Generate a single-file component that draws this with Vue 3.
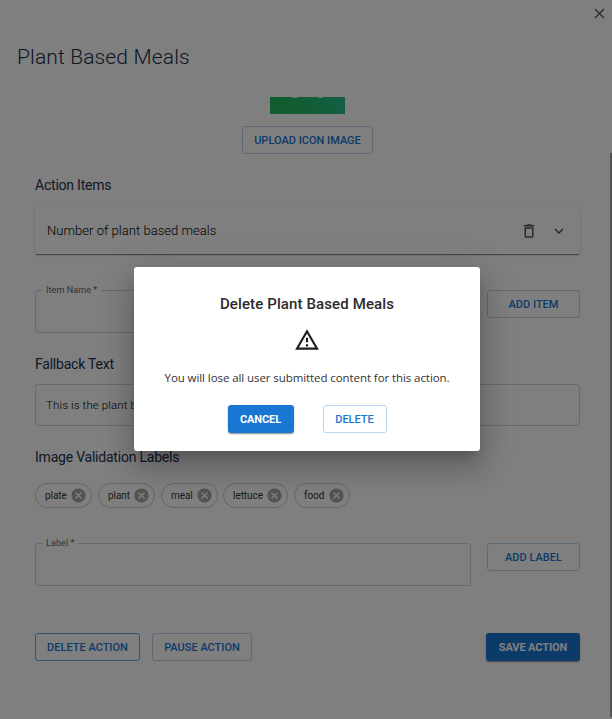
<script setup>
import { ref } from 'vue'

const labels = ref([
  { text: 'plate', size: 'w57' },
  { text: 'plant', size: 'w57' },
  { text: 'meal', size: 'w57' },
  { text: 'lettuce', size: 'w65' },
  { text: 'food', size: 'w56' },
])
</script>

<template>
  <div class="screen">
    <div class="page">
      <header class="header">
        <svg class="close" viewBox="0 0 24 24"><path d="M19 6.41 17.59 5 12 10.59 6.41 5 5 6.41 10.59 12 5 17.59 6.41 19 12 13.41 17.59 19 19 17.59 13.41 12z" /></svg>
        <h1>Plant Based Meals</h1>
      </header>

      <main class="content">
        <svg class="thumb" viewBox="0 0 75 17">
          <defs>
            <linearGradient id="leaf" gradientUnits="userSpaceOnUse" x1="12" y1="20" x2="74" y2="-4">
              <stop offset="0" stop-color="#23b85c" />
              <stop offset="0.5" stop-color="#25bb70" />
              <stop offset="1" stop-color="#2abf8e" />
            </linearGradient>
          </defs>
          <rect width="75" height="17" fill="url(#leaf)" />
          <path d="M21 0h8q-3.500 1.800-8 0zM47 0h7q-3.500 1.800-7 0z" fill="#d8f0e0" />
        </svg>
        <button class="btn upload"><span>UPLOAD ICON IMAGE</span></button>

        <h2 class="h-items">Action Items</h2>
        <section class="card">
          <span class="card-text">Number of plant based meals</span>
          <svg class="trash" viewBox="0 0 24 24"><path d="M6 19c0 1.100.9 2 2 2h8c1.100 0 2-.9 2-2V7H6v12zM8 9h8v10H8V9zm7.500-5-1-1h-5l-1 1H5v2h14V4h-3.500z" /></svg>
          <svg class="chevron" viewBox="0 0 24 24"><path d="M16.590 8.590 12 13.170 7.410 8.590 6 10l6 6 6-6z" /></svg>
        </section>

        <div class="row row-item">
          <div class="field"><label class="item-label">Item Name *</label></div>
          <button class="btn side"><span class="t-item">ADD ITEM</span></button>
        </div>

        <h2 class="h-fallback">Fallback Text</h2>
        <div class="field filled">This is the plant based meals action.</div>

        <h2 class="h-labels">Image Validation Labels</h2>
        <div class="chips">
          <div v-for="l in labels" :key="l.text" class="chip" :class="l.size">
            <span>{{ l.text }}</span>
            <svg viewBox="0 0 24 24"><path d="M12 2C6.470 2 2 6.470 2 12s4.470 10 10 10 10-4.470 10-10S17.530 2 12 2zm5 13.590L15.590 17 12 13.410 8.410 17 7 15.590 10.590 12 7 8.410 8.410 7 12 10.590 15.590 7 17 8.410 13.410 12 17 15.590z" /></svg>
          </div>
        </div>

        <div class="row row-label">
          <div class="field"><label class="label-label">Label *</label></div>
          <button class="btn side"><span>ADD LABEL</span></button>
        </div>

        <footer class="actions">
          <button class="btn del focus"><span>DELETE ACTION</span></button>
          <button class="btn pause"><span>PAUSE ACTION</span></button>
          <button class="btn solid save"><span>SAVE ACTION</span></button>
        </footer>
      </main>
      <i class="scrollbar"></i>
    </div>

    <div class="backdrop">
      <div class="dialog">
        <h3>Delete Plant Based Meals</h3>
        <svg class="warn" viewBox="0 0 24 24"><path d="M12 5.990 19.530 19H4.470L12 5.990M12 2 1 21h22L12 2zm1 14h-2v2h2v-2zm0-6h-2v4h2v-4z" /></svg>
        <p>You will lose all user submitted content for this action.</p>
        <div class="choices">
          <button class="btn solid cancel"><span>CANCEL</span></button>
          <button class="btn remove"><span>DELETE</span></button>
        </div>
      </div>
    </div>
  </div>
</template>

<style>
body {
  margin: 0;
  overflow: hidden;
}
</style>

<style scoped>
* {
  box-sizing: border-box;
}
.screen {
  position: relative;
  width: 612px;
  height: 719px;
  overflow: hidden;
  font-family: Roboto, "Liberation Sans", sans-serif;
  background: #fff;
}
.page {
  height: 719px;
}
.header {
  display: flex;
  flex-direction: column;
  height: 97px;
  padding: 5px 4px 0 17px;
}
.close {
  align-self: flex-end;
  width: 17px;
  height: 17px;
  fill: #5c5c5c;
}
h1 {
  margin: 21px 0 0;
  font-size: 21px;
  line-height: 28px;
  font-weight: 300;
  letter-spacing: 0.14px;
  color: #1c2c50;
}
.content {
  display: flex;
  flex-direction: column;
  padding: 0 32px 0 35px;
}
.thumb {
  width: 75px;
  height: 17px;
  align-self: center;
}
.btn {
  display: flex;
  align-items: center;
  justify-content: center;
  flex: none;
  height: 28px;
  padding: 0;
  border: 1px solid #bad5f1;
  border-radius: 3px;
  background: transparent;
  font-family: inherit;
  font-size: 11px;
  font-weight: 500;
  letter-spacing: 0;
  white-space: nowrap;
  color: #1976d2;
}
.upload {
  width: 131px;
  align-self: center;
  margin-top: 12px;
}
h2 {
  margin: 0;
  font-size: 14px;
  line-height: 20px;
  font-weight: 400;
  letter-spacing: -0.22px;
  color: #1c3154;
}
.h-items {
  margin-top: 21px;
}
.card {
  display: flex;
  align-items: center;
  height: 47px;
  margin-top: 12px;
  padding: 0 12px;
  border-radius: 2px;
  box-shadow: 0 2px 1px -1px rgba(0, 0, 0, 0.3), 0 1px 1px rgba(0, 0, 0, 0.18), 0 1px 3px rgba(0, 0, 0, 0.14);
}
.card-text {
  flex: 1;
  font-size: 13px;
  font-weight: 300;
  letter-spacing: 0.04px;
  color: #000;
}
.trash {
  width: 18px;
  height: 18px;
  margin-right: 12px;
  fill: #555;
}
.chevron {
  width: 18px;
  height: 18px;
  fill: #555;
}
.row {
  display: flex;
  gap: 16px;
}
.row-item {
  margin-top: 36px;
}
.field {
  position: relative;
  flex: 1;
  height: 43px;
  border: 1px solid #d4d4d4;
  border-radius: 3px;
}
.field label {
  position: absolute;
  left: 6px;
  top: -7px;
  padding: 0 4px;
  background: #fff;
  font-size: 9px;
  line-height: 12px;
  letter-spacing: 0.08px;
  color: #666;
}
.side {
  width: 93px;
}
.h-fallback {
  margin-top: 21px;
}
.filled {
  display: flex;
  flex: none;
  align-items: center;
  height: 42px;
  margin-top: 10px;
  padding: 0 10px;
  font-size: 11.5px;
  font-weight: 300;
  letter-spacing: 0.12px;
  color: #000;
}
.h-labels {
  margin-top: 21px;
}
.chips {
  display: flex;
  gap: 6px;
  margin-top: 16px;
}
.chip {
  display: flex;
  align-items: center;
  justify-content: space-between;
  height: 25px;
  padding: 0 4px 0 9px;
  border: 1px solid #cacaca;
  border-radius: 13px;
  font-size: 10px;
  letter-spacing: -0.05px;
  color: #333;
}
.chip svg {
  width: 17px;
  height: 17px;
  fill: #a6a6a6;
}
.w57 {
  width: 57px;
}
.w65 {
  width: 65px;
}
.chip.w65 {
  margin-left: -1px;
}
.w56 {
  width: 56px;
}
.row-label {
  margin-top: 35px;
}
.actions {
  display: flex;
  margin-top: 47px;
}
.del {
  width: 105px;
  margin-right: 12px;
}
.focus {
  border-color: #6fa4dc;
}
.pause {
  width: 100px;
}
.solid {
  border: 0;
  background: #1976d2;
  color: #fff;
  font-weight: 700;
  letter-spacing: -0.1px;
  box-shadow: 0 2px 1px -1px rgba(0, 0, 0, 0.2), 0 1px 2px rgba(0, 0, 0, 0.3);
}
.save {
  width: 94px;
  margin-left: auto;
}
.scrollbar {
  position: absolute;
  right: 0;
  top: 153px;
  width: 2px;
  height: 564px;
  background: #a8a8a8;
}
.backdrop {
  position: absolute;
  inset: 0;
  display: flex;
  justify-content: center;
  align-items: flex-start;
  padding: 267px 0 0 2px;
  background: rgba(0, 0, 0, 0.5);
}
.dialog {
  display: flex;
  flex-direction: column;
  align-items: center;
  width: 346px;
  height: 184px;
  padding-top: 27px;
  border-radius: 3px;
  background: #fff;
  box-shadow: 0 8px 11px -5px rgba(0, 0, 0, 0.2), 0 18px 28px 2px rgba(0, 0, 0, 0.14), 0 7px 34px 6px rgba(0, 0, 0, 0.12);
}
h3 {
  margin: 0;
  font-size: 15px;
  line-height: 20px;
  font-weight: 500;
  letter-spacing: 0.12px;
  color: #2b2b2b;
}
.warn {
  width: 26px;
  height: 26px;
  margin-top: 13px;
  fill: #1e1e1e;
}
p {
  margin: 16px 0 0;
  font-family: "Open Sans", "Noto Sans", sans-serif;
  font-size: 11.5px;
  line-height: 18px;
  letter-spacing: -0.08px;
  color: #333;
  white-space: nowrap;
}
.choices {
  display: flex;
  gap: 29px;
  margin-top: 18px;
}
.cancel {
  width: 66px;
}
.remove {
  width: 64px;
}
</style>
